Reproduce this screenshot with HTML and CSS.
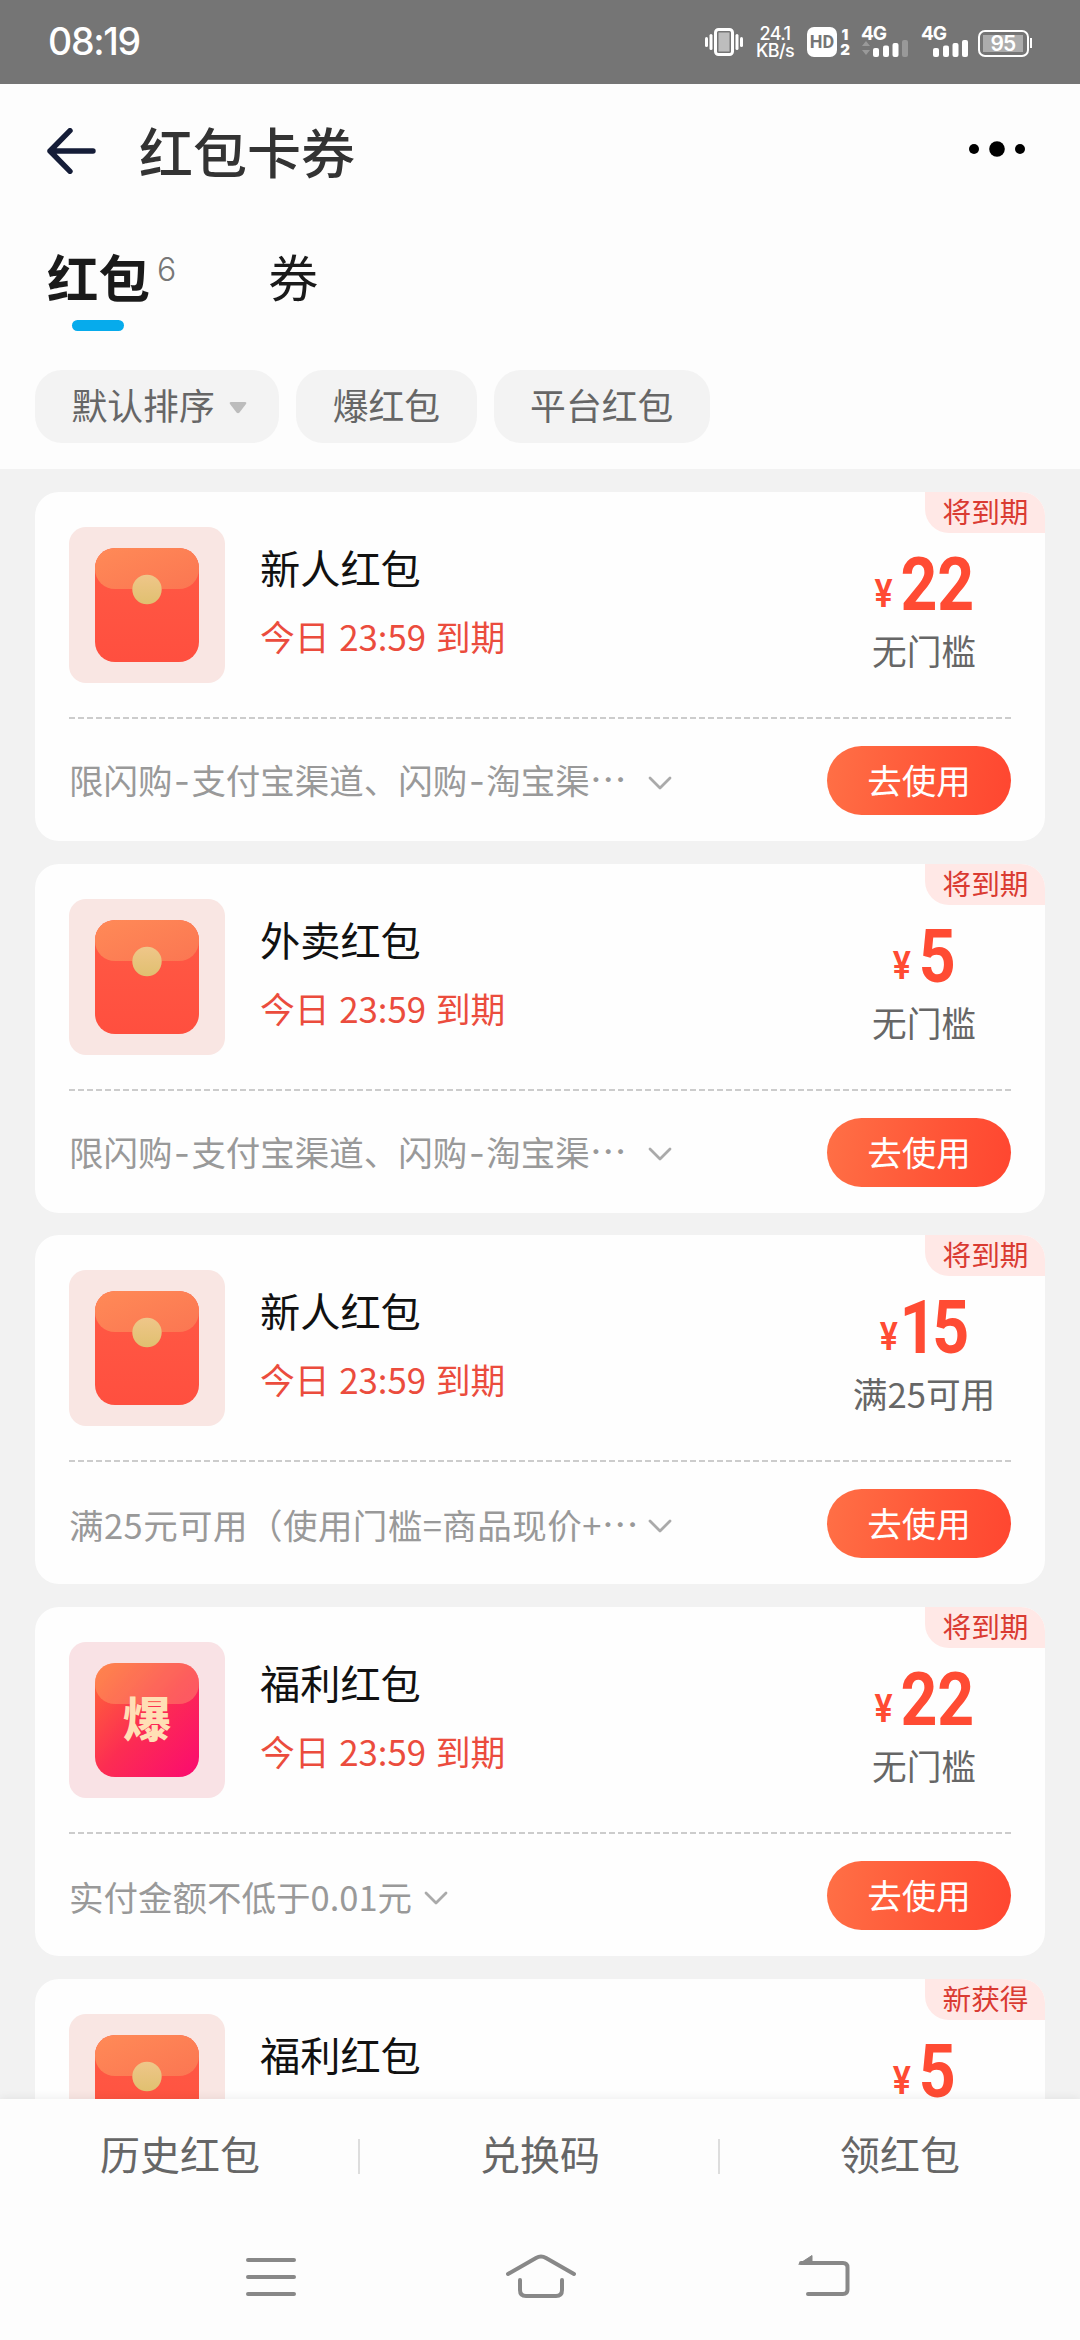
FILE: index.html
```html
<!DOCTYPE html>
<html lang="zh-CN">
<head>
<meta charset="utf-8">
<title>红包卡券</title>
<link rel="stylesheet" href="styles.css">
</head>
<body>
<svg class="defs" width="0" height="0">
  <defs>
    <linearGradient id="flap" x1="0" y1="0" x2="1" y2="1"><stop offset="0" stop-color="#ff8a57"/><stop offset="1" stop-color="#fb7652"/></linearGradient>
    <linearGradient id="body" x1="0" y1="0" x2="0" y2="1"><stop offset="0" stop-color="#ff5a45"/><stop offset="1" stop-color="#ff4f3f"/></linearGradient>
    <linearGradient id="gold" x1="0" y1="0" x2="0" y2="1"><stop offset="0" stop-color="#efc689"/><stop offset="1" stop-color="#e0c070"/></linearGradient>
    <linearGradient id="hot" x1="0" y1="0" x2="1" y2="1"><stop offset="0" stop-color="#ff6b36"/><stop offset="0.5" stop-color="#fc2d52"/><stop offset="1" stop-color="#fb0a70"/></linearGradient>
    <symbol id="packet" viewBox="0 0 156 156">
      <rect x="26" y="21" width="104" height="114" rx="20" fill="url(#body)"/>
      <rect x="26" y="21" width="104" height="41" rx="20" fill="url(#flap)"/>
      <circle cx="78" cy="62.500" r="14.700" fill="url(#gold)"/>
    </symbol>
    <symbol id="chevron" viewBox="0 0 24 14"><path d="M2 2l10 10L22 2" fill="none" stroke="#aaa" stroke-width="2.800" stroke-linecap="round" stroke-linejoin="round"/></symbol>
  </defs>
</svg>
<div class="screen">
  <div class="status">
    <span class="clock">08:19</span>
    <div class="indicators">
      <svg class="vibrate" width="38" height="28" viewBox="0 0 38 28"><g fill="#fff"><rect x="0" y="9" width="3" height="10" rx="1.500"/><rect x="4.500" y="6" width="3" height="16" rx="1.500"/><rect x="30.500" y="6" width="3" height="16" rx="1.500"/><rect x="35" y="9" width="3" height="10" rx="1.500"/></g><rect x="10.500" y="1.500" width="17" height="25" rx="3" fill="none" stroke="#fff" stroke-width="3"/><rect x="13.500" y="4.500" width="11" height="19" fill="#bdbdbd"/></svg>
      <div class="speed"><span>24.1</span><span>KB/s</span></div>
      <div class="hd"><span class="hd-box">HD</span><span class="hd-sims"><b>1</b><b>2</b></span></div>
      <div class="signal"><span>4G</span>
        <svg width="47" height="18" viewBox="0 0 47 18"><path d="M1 7l4-5 4 5zM1 11h8l-4 5z" fill="#999"/><g fill="#fff"><rect x="12" y="9" width="6" height="9" rx="2"/><rect x="22" y="6.500" width="6" height="11.500" rx="2"/><rect x="31.500" y="4" width="6" height="14" rx="2"/></g><rect x="41" y="1" width="6" height="17" rx="2" fill="#999"/></svg></div>
      <div class="signal"><span>4G</span>
        <svg width="47" height="18" viewBox="0 0 47 18"><g fill="#fff"><rect x="12" y="9" width="6" height="9" rx="2"/><rect x="22" y="6.500" width="6" height="11.500" rx="2"/><rect x="31.500" y="4" width="6" height="14" rx="2"/><rect x="41" y="1" width="6" height="17" rx="2"/></g></svg></div>
      <div class="battery"><span>95</span></div>
    </div>
  </div>

  <header class="titlebar">
    <svg width="49" height="46" viewBox="0 0 49 46"><path d="M23 2.700L3 23l20 20.300M3 23h43" fill="none" stroke="#151d38" stroke-width="5.400" stroke-linecap="round" stroke-linejoin="round"/></svg>
    <h1>红包卡券</h1>
    <svg class="more" width="56" height="16" viewBox="0 0 56 16"><circle cx="5" cy="8" r="5"/><circle cx="28" cy="8" r="7.800"/><circle cx="51" cy="8" r="5"/></svg>
  </header>

  <nav class="tabs">
    <div class="tab active"><span class="tab-label">红包</span><sup>6</sup></div>
    <div class="tab"><span class="tab-label">券</span></div>
  </nav>

  <div class="filters">
    <div class="chip">默认排序<svg width="18" height="13" viewBox="0 0 18 13"><path d="M2 1h14q2 0 1 2l-6.500 8.500q-1.500 1.500-3 0L1 3q-1-2 1-2z" fill="#bcbcbc"/></svg></div>
    <div class="chip">爆红包</div>
    <div class="chip">平台红包</div>
  </div>

  <main class="list">
    <article class="card">
      <span class="badge">将到期</span>
      <div class="top">
        <svg class="icon"><use href="#packet"/></svg>
        <div class="info"><h2>新人红包</h2><p>今日 23:59 到期</p></div>
        <div class="value"><div class="price"><i>¥</i>22</div><p>无门槛</p></div>
      </div>
      <div class="bottom"><span class="rule">限闪购<span class="dash">-</span>支付宝渠道、闪购<span class="dash">-</span>淘宝渠<span class="dots">…</span></span><svg class="chev"><use href="#chevron"/></svg><button>去使用</button></div>
    </article>
    <article class="card">
      <span class="badge">将到期</span>
      <div class="top">
        <svg class="icon"><use href="#packet"/></svg>
        <div class="info"><h2>外卖红包</h2><p>今日 23:59 到期</p></div>
        <div class="value"><div class="price"><i>¥</i>5</div><p>无门槛</p></div>
      </div>
      <div class="bottom"><span class="rule">限闪购<span class="dash">-</span>支付宝渠道、闪购<span class="dash">-</span>淘宝渠<span class="dots">…</span></span><svg class="chev"><use href="#chevron"/></svg><button>去使用</button></div>
    </article>
    <article class="card">
      <span class="badge">将到期</span>
      <div class="top">
        <svg class="icon"><use href="#packet"/></svg>
        <div class="info"><h2>新人红包</h2><p>今日 23:59 到期</p></div>
        <div class="value"><div class="price"><i>¥</i><span class="one">1</span>5</div><p>满25可用</p></div>
      </div>
      <div class="bottom"><span class="rule wide">满25元可用（使用门槛=商品现价+<span class="dots">…</span></span><svg class="chev"><use href="#chevron"/></svg><button>去使用</button></div>
    </article>
    <article class="card">
      <span class="badge">将到期</span>
      <div class="top">
        <svg class="icon hot" viewBox="0 0 156 156"><rect x="26" y="21" width="104" height="114" rx="20" fill="url(#hot)"/><rect x="26" y="21" width="104" height="41" rx="20" fill="#ffa64d" fill-opacity="0.300"/><rect x="26" y="21" width="104" height="41" rx="20" fill="#fff" fill-opacity="0.080"/><text x="78" y="95" text-anchor="middle" class="hot-text">爆</text></svg>
        <div class="info"><h2>福利红包</h2><p>今日 23:59 到期</p></div>
        <div class="value"><div class="price"><i>¥</i>22</div><p>无门槛</p></div>
      </div>
      <div class="bottom"><span class="rule short">实付金额不低于0.01元</span><svg class="chev"><use href="#chevron"/></svg><button>去使用</button></div>
    </article>
    <article class="card">
      <span class="badge">新获得</span>
      <div class="top">
        <svg class="icon"><use href="#packet"/></svg>
        <div class="info"><h2>福利红包</h2></div>
        <div class="value"><div class="price"><i>¥</i>5</div></div>
      </div>
    </article>
  </main>

  <footer class="actions"><span>历史红包</span><span>兑换码</span><span>领红包</span></footer>
  <div class="sysnav">
    <svg width="50" height="46" viewBox="0 0 50 46"><path d="M2 6h46M2 23h46M2 40h46"/></svg>
    <svg class="home" width="72" height="46" viewBox="0 0 72 46"><path d="M3 20L31 4q5-3 10 0L69 20M15 26v10q0 6 6 6h30q6 0 6-6V26"/></svg>
    <svg class="back" width="54" height="46" viewBox="0 0 54 46"><path d="M4 9h42q4.500 0 4.500 4.500v22q0 4.500-4.500 4.500H11"/><path d="M2 10L15 1.500v8z" fill="#888" stroke-width="1"/></svg>
  </div>
</div>
</body>
</html>
```

FILE: styles.css
```css
* { box-sizing: border-box; }
body, h1, h2, p { margin: 0; }
body { background: #fff; }
.defs { position: absolute; }
.screen {
  width: 1080px;
  height: 2340px;
  overflow: hidden;
  display: flex;
  flex-direction: column;
  background: #fdfdfd;
  font-family: "Noto Sans CJK SC", sans-serif;
  color: #1a1a1a;
  white-space: nowrap;
}

.status {
  flex: none;
  height: 84px;
  background: #757575;
  color: #fff;
  display: flex;
  justify-content: space-between;
  align-items: center;
  padding: 0 51px 0 48px;
}
.clock { font: 500 37.500px/50px Inter, sans-serif; letter-spacing: -1.300px; }
.indicators { display: flex; align-items: flex-start; height: 30px; }
.vibrate { margin: 1px 13px 0 0; }
.speed {
  width: 38px;
  height: 34px;
  margin: -2px 13px 0 0;
  font: 500 18px/17px Inter, sans-serif;
  letter-spacing: -0.600px;
  display: flex;
  flex-direction: column;
  align-items: center;
}
.hd { display: flex; width: 44px; margin-right: 10px; }
.hd-box {
  width: 30px;
  height: 30px;
  border-radius: 7px;
  background: #fff;
  color: #757575;
  font: 700 18px/30px Roboto, sans-serif;
  text-align: center;
}
.hd-sims { display: flex; flex-direction: column; width: 14px; text-align: center; padding-left: 2px; font: 900 15px/15px Inter, sans-serif; }
.signal { position: relative; width: 47px; height: 30px; margin-right: 13px; display: flex; align-items: flex-end; }
.signal span { position: absolute; left: 0; top: -1px; font: 700 19px/16px Inter, sans-serif; letter-spacing: -1px; }
.signal svg { display: block; }
.battery {
  position: relative;
  width: 51px;
  height: 27px;
  margin: 3px 0 0 -3px;
  padding: 2.500px 3px;
  border: 2.500px solid #fff;
  border-radius: 7px;
}
.battery span { display: block; width: 40px; height: 17px; background: #acacac; font: 600 21px/18px Inter, sans-serif; text-align: center; letter-spacing: -0.8px; }
.battery::after { content: ""; position: absolute; right: -5px; top: 6px; width: 2px; height: 10px; background: #fff; }

.titlebar { flex: none; height: 136px; display: flex; align-items: center; padding: 0 55px 0 47px; }
.titlebar > svg:first-child { margin-top: -2px; }
.titlebar h1 { margin: -3px 0 0 43px; font-size: 54px; line-height: 60px; font-weight: 500; color: #333; }
.more { margin-left: auto; margin-top: -6px; }

.tabs { flex: none; height: 150px; padding: 27px 0 0 47px; display: flex; gap: 92px; }
.tab { position: relative; display: flex; height: 84px; font-size: 50px; line-height: 57px; }
.tab.active .tab-label { font-weight: 700; font-size: 51.500px; }
.tab sup { margin-left: 7px; font: 300 32px/46px Inter, sans-serif; color: #777; }
.tab.active::after { content: ""; position: absolute; left: 25px; bottom: 0; width: 52px; height: 11px; border-radius: 6px; background: #06abec; }

.filters { flex: none; height: 99px; padding-left: 35px; display: flex; gap: 17px; }
.chip {
  height: 73px;
  padding: 0 36.500px;
  border-radius: 27px;
  background: #f3f3f3;
  color: #666;
  font-size: 35.800px;
  line-height: 68px;
}
.chip svg { margin: 0 -4px 6px 14px; }

.list { flex: 1; min-height: 0; overflow: hidden; background: #f2f2f2; padding: 23px 35px 0; display: flex; flex-direction: column; gap: 22.700px; }
.card { position: relative; flex: none; height: 349px; padding: 0 33px 0 34px; border-radius: 24px; background: #fefefe; }
.badge {
  position: absolute;
  right: 0;
  top: 0;
  width: 120px;
  height: 41px;
  border-radius: 0 24px 0 24px;
  background: #ffe8e6;
  color: #da3b32;
  font-size: 28.700px;
  line-height: 37px;
  text-align: center;
  padding-left: 1px;
}
.top {
  display: flex;
  height: 227px;
  padding-top: 35px;
  background: repeating-linear-gradient(90deg, #ccc 0 6px, transparent 6px 9px) left bottom / 100% 2px no-repeat;
}
.icon { flex: none; width: 156px; height: 156px; border-radius: 17px; background: #f9e6e3; }
.icon.hot { background: #f9e2e5; }
.hot-text { font-size: 48px; font-weight: 900; fill: #ffdfb5; }
.info { margin-left: 35px; padding-top: 15px; }
.info h2 { font-size: 40.200px; line-height: 50px; font-weight: 400; color: #111; }
.info p { margin-top: 21px; font-size: 34.800px; line-height: 46px; word-spacing: 1.800px; color: #eb4c3d; }
.value { margin: 0 8px 0 auto; width: 160px; display: flex; flex-direction: column; align-items: center; }
.price { height: 76px; margin-top: 20px; font: 700 74px/76px Roboto, sans-serif; color: #ff4b33; transform: scaleX(0.870); }
.price i { font: 600 39px/40px Roboto, sans-serif; margin-right: 9px; vertical-align: 3px; }
.one { margin: 0 -5px 0 -7px; }
.value p { margin-top: 4px; font-size: 34.700px; line-height: 46px; color: #666; }
.bottom { height: 122px; display: flex; align-items: center; }
.rule { width: 560px; font-size: 34.500px; color: #999; line-height: 50px; margin-top: 1px; }
.rule.wide { letter-spacing: 0.450px; }
.rule.short { width: auto; margin-right: -7px; }
.dash { font-family: Inter, sans-serif; padding: 0 1.500px; }
.dots { font-size: 37px; line-height: 40px; }
.chev { width: 24px; height: 14px; margin: 5px 0 0 19px; }
.bottom button {
  margin: 1px 1px 0 auto;
  width: 184px;
  height: 69px;
  padding: 0 0 3px;
  border: 0;
  border-radius: 35px;
  background: linear-gradient(100deg, #ff7046, #ff5537 60%, #ff4630);
  color: #fff;
  font: 400 34.500px/66px "Noto Sans CJK SC", sans-serif;
}

.actions { flex: none; position: relative; height: 110px; display: grid; grid-template-columns: repeat(3, 1fr); background: #fdfdfd; box-shadow: 0 -2px 8px rgba(0, 0, 0, 0.060); color: #666; font-size: 40px; line-height: 108px; text-align: center; }
.actions span { background: linear-gradient(#ddd, #ddd) right 40px / 2px 35px no-repeat; }
.actions span:last-child { background: none; }
.sysnav { flex: none; position: relative; height: 131px; display: flex; padding: 45px 0 0 246px; background: #fdfdfd; }
.sysnav svg { fill: none; stroke: #888; stroke-width: 4; stroke-linecap: round; stroke-linejoin: round; }
.home { margin-left: 209px; }
.back { margin-left: 220px; }
```
